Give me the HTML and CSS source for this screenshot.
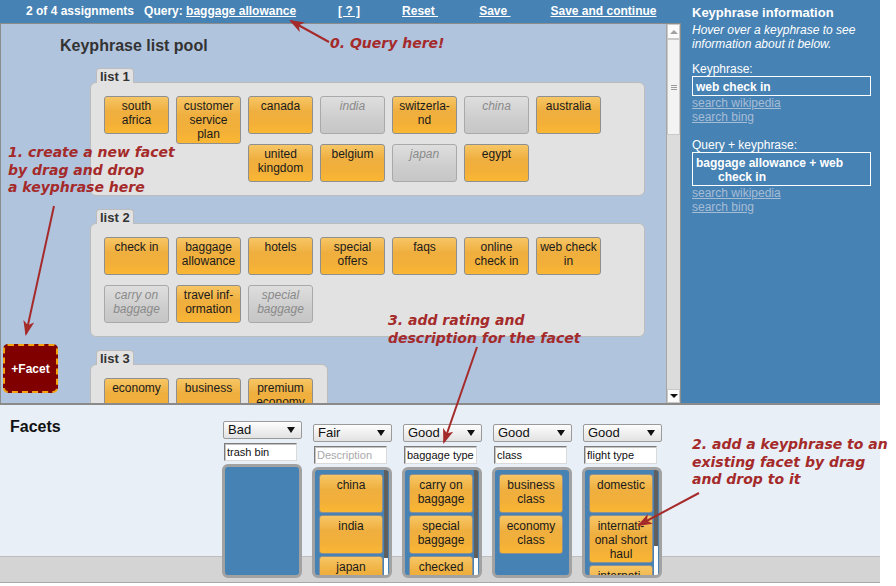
FILE: index.html
```html
<!DOCTYPE html>
<html lang="en">
<head>
<meta charset="utf-8">
<title>Keyphrase facets</title>
<link rel="stylesheet" href="styles.css">
</head>
<body>
<div class="page">
  <div class="top">
    <div class="left">
      <div class="topbar">
        <span class="status">2 of 4 assignments</span>
        <span class="query">Query: <a class="qlink">baggage allowance</a></span>
        <a class="nav help">[ ? ]</a>
        <a class="nav reset">Reset&nbsp;</a>
        <a class="nav save">Save&nbsp;</a>
        <a class="nav savec">Save and continue</a>
      </div>
      <div class="pool">
        <div class="pool-content">
          <h1 class="pool-title">Keyphrase list pool</h1>
          <div class="klist">
            <div class="ktab">list 1</div>
            <div class="kbox">
              <div class="kp">south africa</div>
              <div class="kp">customer service plan</div>
              <div class="kp">canada</div>
              <div class="kp off">india</div>
              <div class="kp">switzerla-nd</div>
              <div class="kp off">china</div>
              <div class="kp">australia</div>
              <div class="kp">united kingdom</div>
              <div class="kp">belgium</div>
              <div class="kp off">japan</div>
              <div class="kp">egypt</div>
            </div>
          </div>
          <div class="klist">
            <div class="ktab">list 2</div>
            <div class="kbox">
              <div class="kp">check in</div>
              <div class="kp">baggage allowance</div>
              <div class="kp">hotels</div>
              <div class="kp">special offers</div>
              <div class="kp">faqs</div>
              <div class="kp">online check in</div>
              <div class="kp">web check in</div>
              <div class="kp off">carry on baggage</div>
              <div class="kp">travel inf-ormation</div>
              <div class="kp off">special baggage</div>
            </div>
          </div>
          <div class="klist">
            <div class="ktab">list 3</div>
            <div class="kbox">
              <div class="kp">economy</div>
              <div class="kp">business</div>
              <div class="kp">premium economy</div>
            </div>
          </div>
          <div class="add-facet">+Facet</div>
        </div>
        <div class="sbar">
          <div class="sb-btn"><span class="tri-up"></span></div>
          <div class="sb-thumb"><span class="grip"></span></div>
          <div class="sb-space"></div>
          <div class="sb-btn sb-down"><span class="tri-down"></span></div>
        </div>
      </div>
    </div>
    <div class="info">
      <h2 class="info-title">Keyphrase information</h2>
      <p class="info-hint">Hover over a keyphrase to see information about it below.</p>
      <div class="info-label">Keyphrase:</div>
      <div class="info-box">web check in</div>
      <a class="info-link">search wikipedia</a>
      <a class="info-link">search bing</a>
      <div class="info-label second">Query + keyphrase:</div>
      <div class="info-box hang">baggage allowance + web check in</div>
      <a class="info-link">search wikipedia</a>
      <a class="info-link">search bing</a>
    </div>
  </div>
  <div class="bottom">
    <div class="facets">
      <div class="facets-title">Facets</div>
      <div class="facet-cols">
        <div class="fcol">
          <div class="fsel"><span>Bad</span><span class="tri-sel"></span></div>
          <div class="finput">trash bin</div>
          <div class="fbox tall"><div class="flist"></div></div>
        </div>
        <div class="fcol">
          <div class="fsel"><span>Fair</span><span class="tri-sel"></span></div>
          <div class="finput placeholder">Description</div>
          <div class="fbox">
            <div class="flist">
              <div class="fkp">china</div>
              <div class="fkp">india</div>
              <div class="fkp">japan</div>
            </div>
            <div class="fbar"><div class="fthumb" style="height:84%"></div></div>
          </div>
        </div>
        <div class="fcol">
          <div class="fsel"><span>Good</span><span class="tri-sel"></span></div>
          <div class="finput">baggage type</div>
          <div class="fbox">
            <div class="flist">
              <div class="fkp">carry on baggage</div>
              <div class="fkp">special baggage</div>
              <div class="fkp">checked baggage</div>
            </div>
            <div class="fbar"><div class="fthumb" style="height:84%"></div></div>
          </div>
        </div>
        <div class="fcol">
          <div class="fsel"><span>Good</span><span class="tri-sel"></span></div>
          <div class="finput">class</div>
          <div class="fbox">
            <div class="flist">
              <div class="fkp">business class</div>
              <div class="fkp">economy class</div>
            </div>
          </div>
        </div>
        <div class="fcol">
          <div class="fsel"><span>Good</span><span class="tri-sel"></span></div>
          <div class="finput">flight type</div>
          <div class="fbox">
            <div class="flist">
              <div class="fkp">domestic</div>
              <div class="fkp">internati-onal short haul</div>
              <div class="fkp">internati-onal long haul</div>
            </div>
            <div class="fbar"><div class="fthumb" style="height:72%"></div></div>
          </div>
        </div>
      </div>
    </div>
  </div>

  <div class="note note0">0. Query here!</div>
  <div class="note note1">1. create a new facet<br>by drag and drop<br>a keyphrase here</div>
  <div class="note note3">3. add rating and<br>description for the facet</div>
  <div class="note note2">2. add a keyphrase to an<br>existing facet by drag<br>and drop to it</div>
  <svg class="arrows" width="896" height="586" viewBox="0 0 896 586" xmlns="http://www.w3.org/2000/svg">
    <defs>
      <marker id="ah" viewBox="0 0 15 11" refX="13" refY="5.5" markerWidth="15" markerHeight="11" markerUnits="userSpaceOnUse" orient="auto">
        <path d="M0,0 L15,5.5 L0,11 L4,5.5 Z" fill="#a52a2a"/>
      </marker>
    </defs>
    <g stroke="#a52a2a" stroke-width="2" fill="none" marker-end="url(#ah)">
      <line x1="329" y1="42" x2="291" y2="21"/>
      <line x1="54" y1="206" x2="26" y2="334"/>
      <line x1="477" y1="347" x2="444" y2="442"/>
      <line x1="699" y1="493" x2="639" y2="525"/>
    </g>
  </svg>
</div>
</body>
</html>
```

FILE: styles.css
```css
html, body {
  margin: 0;
  padding: 0;
  background: #ffffff;
}

body {
  font-family: "Liberation Sans", Arial, sans-serif;
  color: #1a1a1a;
}

.page {
  position: relative;
  width: 880px;
}

/* ---------- top section ---------- */
.top {
  display: flex;
  height: 403px;
  border-bottom: 2px solid #8a8a8a;
}

.left {
  width: 681px;
  display: flex;
  flex-direction: column;
}

.topbar {
  height: 23px;
  background: #4682b4;
  color: #ffffff;
  font-weight: bold;
  font-size: 12px;
  line-height: 23px;
  display: flex;
  padding-left: 26px;
  white-space: nowrap;
}

.topbar a {
  color: #ffffff;
  text-decoration: underline;
}

.query { margin-left: 10px; }
.help { margin-left: 42px; }
.reset { margin-left: 42px; }
.save { margin-left: 41px; }
.savec { margin-left: 40px; }

.pool {
  flex: 1;
  display: flex;
  border: 1px solid #8c8c8c;
  border-bottom: none;
  background: #b0c4de;
  min-height: 0;
}

.pool-content {
  flex: 1;
  position: relative;
  overflow: hidden;
}

.pool-title {
  margin: 12px 0 12px 59px;
  font-size: 16px;
  line-height: 20px;
  font-weight: bold;
  color: #333333;
}

.klist {
  width: fit-content;
  margin: 0 21px 13px 89px;
}

.ktab {
  position: relative;
  z-index: 1;
  width: fit-content;
  margin-left: 6px;
  margin-bottom: -1px;
  padding: 1px 3px 0;
  background: #e2e2e2;
  border: 1px solid #bcbcbc;
  border-bottom: none;
  border-radius: 4px 4px 0 0;
  font-size: 13px;
  line-height: 13px;
  font-weight: bold;
  color: #333333;
}

.kbox {
  display: flow-root;
  background: #e2e2e2;
  border: 1px solid #bcbcbc;
  border-radius: 6px;
  padding: 13px 10px 3px;
}

.kp, .fkp {
  box-sizing: border-box;
  width: 65px;
  min-height: 38px;
  padding: 2px 2px;
  border: 1px solid #8f8f8f;
  border-radius: 3px;
  background: linear-gradient(to bottom, #f7c665 0%, #efaf3f 40%, #f3b038 75%, #fab733 100%);
  font-size: 12px;
  line-height: 14px;
  text-align: center;
  color: #1a1a1a;
}

.kp {
  float: left;
  margin: 0 4px 10px 3px;
}

.kp.off {
  background: linear-gradient(to bottom, #dedede 0%, #cdcdcd 60%, #c6c6c6 100%);
  border-color: #a9a9a9;
  color: #8a8a8a;
  font-style: italic;
}

.add-facet {
  position: absolute;
  left: 2px;
  top: 320px;
  width: 55px;
  height: 49px;
  box-sizing: border-box;
  background: #800000;
  border: 2px dashed #f2a30f;
  border-radius: 5px;
  color: #ffffff;
  font-weight: bold;
  font-size: 12px;
  display: flex;
  align-items: center;
  justify-content: center;
}

/* pool scrollbar */
.sbar {
  width: 13px;
  border-left: 1px solid #a6a6a6;
  background: #dcdcdc;
  display: flex;
  flex-direction: column;
}

.sb-btn {
  height: 15px;
  box-sizing: border-box;
  background: #fbfbfb;
  border: 1px solid #c9c9c9;
  display: flex;
  align-items: center;
  justify-content: center;
}

.sb-down {
  height: 14px;
}

.tri-up {
  width: 0;
  height: 0;
  border-left: 4px solid transparent;
  border-right: 4px solid transparent;
  border-bottom: 4px solid #a2a2a2;
}

.tri-down {
  width: 0;
  height: 0;
  border-left: 4px solid transparent;
  border-right: 4px solid transparent;
  border-top: 4px solid #111111;
}

.sb-thumb {
  height: 96px;
  box-sizing: border-box;
  background: #f3f3f3;
  border: 1px solid #cacaca;
  display: flex;
  align-items: center;
  justify-content: center;
}

.grip {
  width: 6px;
  height: 5px;
  background: repeating-linear-gradient(to bottom, #9c9c9c 0 1px, transparent 1px 2px);
}

.sb-space {
  flex: 1;
}

/* info panel */
.info {
  width: 199px;
  box-sizing: border-box;
  padding: 5px 9px 0 11px;
  background: #4682b4;
  color: #ffffff;
  font-size: 12px;
  line-height: 14px;
}

.info-title {
  margin: 0;
  font-size: 13px;
  line-height: 16px;
  font-weight: bold;
}

.info-hint {
  margin: 2px 0 0;
  font-style: italic;
}

.info-label {
  margin-top: 11px;
}

.info-label.second {
  margin-top: 14px;
}

.info-box {
  border: 1px solid #ffffff;
  padding: 3px 3px 1px;
  font-weight: bold;
}

.info-box.hang {
  padding-left: 25px;
  text-indent: -22px;
}

.info-link {
  display: block;
  color: #a6bdd6;
  text-decoration: underline;
}

/* ---------- facets ---------- */
.bottom {
  height: 177px;
  background: #d4d4d4;
  border-bottom: 1px solid #a8a8a8;
}

.facets {
  height: 151px;
  border-bottom: 1px solid #bdbdbd;
  background: #e8eff7;
  display: flex;
  align-items: flex-start;
}

.facets-title {
  width: 222px;
  box-sizing: border-box;
  padding: 12px 0 0 10px;
  font-size: 16px;
  line-height: 20px;
  font-weight: bold;
  color: #111111;
}

.facet-cols {
  display: flex;
  gap: 10px;
  align-items: flex-end;
  padding-top: 16px;
}

.fcol {
  width: 80px;
}

.fsel {
  margin-left: 1px;
  width: 79px;
  height: 18px;
  box-sizing: border-box;
  border: 1px solid #9a9a9a;
  border-radius: 2px;
  background: linear-gradient(to bottom, #fdfdfd, #e2e2e2);
  display: flex;
  align-items: center;
  justify-content: space-between;
  padding: 0 6px 0 4px;
  font-size: 13px;
  line-height: 16px;
  color: #111111;
}

.tri-sel {
  width: 0;
  height: 0;
  border-left: 4px solid transparent;
  border-right: 4px solid transparent;
  border-top: 6px solid #111111;
}

.finput {
  margin: 4px 0 3px 2px;
  width: 73px;
  height: 18px;
  box-sizing: border-box;
  background: #ffffff;
  border: 1px solid;
  border-color: #7b7b7b #dadada #dadada #7b7b7b;
  box-shadow: inset 1px 1px 0 #c4c4c4;
  padding: 0 2px;
  font-size: 11px;
  line-height: 16px;
  color: #111111;
  white-space: nowrap;
  overflow: hidden;
}

.finput.placeholder {
  color: #a9a9a9;
}

.fbox {
  height: 111px;
  box-sizing: border-box;
  border: 3px solid #a2a2a2;
  border-radius: 6px;
  background: #4682b4;
  overflow: hidden;
  display: flex;
}

.fbox.tall {
  height: 114px;
}

.flist {
  flex: 1;
  padding: 4px 0 0 4px;
}

.fkp {
  width: 64px;
  min-height: 39px;
  padding: 3px 2px 1px;
  margin-bottom: 2px;
}

.fbar {
  width: 4px;
  margin-right: 1px;
  background: #ffffff;
}

.fthumb {
  background: #5f5f5f;
}

/* ---------- annotations ---------- */
.note {
  position: absolute;
  font-family: "DejaVu Sans", sans-serif;
  font-weight: bold;
  font-style: italic;
  font-size: 14px;
  line-height: 17.6px;
  color: #a52a2a;
  white-space: nowrap;
}

.note0 { left: 330px; top: 35px; }
.note1 { left: 8px; top: 144px; }
.note3 { left: 388px; top: 311px; line-height: 18px; }
.note2 { left: 692px; top: 436px; }

.arrows {
  position: absolute;
  left: 0;
  top: 0;
  pointer-events: none;
}
```
